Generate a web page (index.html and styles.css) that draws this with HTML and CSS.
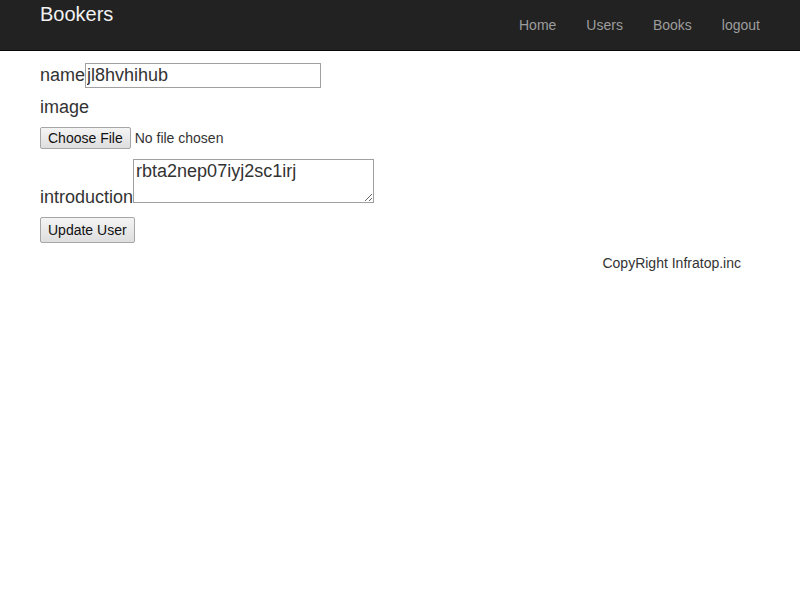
FILE: index.html
```html
<!DOCTYPE html>
<html>
<head>
<meta charset="utf-8">
<title>Bookers</title>
<link rel="stylesheet" href="styles.css">
</head>
<body>
<header class="navbar">
  <div class="container nav-inner">
    <a class="brand" href="#">Bookers</a>
    <ul class="nav-links">
      <li><a href="#">Home</a></li>
      <li><a href="#">Users</a></li>
      <li><a href="#">Books</a></li>
      <li><a href="#">logout</a></li>
    </ul>
  </div>
</header>
<main class="container main">
  <form class="user-form">
    <div class="field field-name"><label>name</label><input type="text" class="text-input" value="jl8hvhihub"></div>
    <div class="field field-image"><label>image</label></div>
    <div class="field field-file"><input type="file" class="file-input"></div>
    <div class="field field-intro"><label>introduction</label><textarea class="intro-input">rbta2nep07iyj2sc1irj</textarea></div>
    <div class="field field-submit"><input type="submit" class="submit-btn" value="Update User"></div>
  </form>
  <footer class="footer">CopyRight Infratop.inc</footer>
</main>
</body>
</html>
```
FILE: styles.css
```css
html, body {
  margin: 0;
  padding: 0;
}
body {
  font-family: "Liberation Sans", Arial, sans-serif;
  font-size: 14px;
  color: #333;
  background: #fff;
}
.container {
  width: 720px;
  margin: 0 auto;
  padding: 0 40px;
}
.navbar {
  background: #222;
  border-bottom: 1px solid #080808;
  height: 50px;
}
.nav-inner {
  display: flex;
  justify-content: space-between;
  align-items: flex-start;
  height: 50px;
}
.brand {
  color: #f2f2f2;
  font-size: 20px;
  line-height: 28px;
  text-decoration: none;
}
.nav-links {
  list-style: none;
  margin: 0 -15px 0 0;
  padding: 0;
  display: flex;
}
.nav-links a {
  display: block;
  padding: 15px;
  line-height: 20px;
  color: #9d9d9d;
  text-decoration: none;
  font-size: 14px;
}
.main {
  padding-top: 12px;
}
.field {
  font-size: 18px;
  color: #333;
}
.field-name {
  display: flex;
  align-items: baseline;
  height: 25px;
}
.text-input {
  font-family: "Liberation Sans", Arial, sans-serif;
  font-size: 18px;
  width: 236px;
  height: 25px;
  box-sizing: border-box;
  border: 1px solid #a0a0a0;
  padding: 0 1px;
  margin: 0;
  color: #333;
}
.field-image {
  margin-top: 9px;
  line-height: 21px;
}
.field-file {
  margin-top: 9px;
  height: 22px;
}
.file-input {
  font-family: "Liberation Sans", Arial, sans-serif;
  font-size: 14px;
  margin: 0;
  color: #333;
}
.file-input::file-selector-button {
  font-family: "Liberation Sans", Arial, sans-serif;
  font-size: 14px;
  height: 22px;
  padding: 0 7px;
  margin-right: 4px;
  border: 1px solid #a6a6a6;
  border-radius: 2px;
  background: linear-gradient(#f4f4f4, #dedede);
  color: #111;
}
.field-intro {
  margin-top: 10px;
  line-height: 21px;
}
.intro-input {
  font-family: "Liberation Sans", Arial, sans-serif;
  font-size: 18px;
  width: 241px;
  height: 44px;
  box-sizing: border-box;
  border: 1px solid #a0a0a0;
  padding: 1px 2px;
  margin: 0;
  color: #333;
  vertical-align: baseline;
}
.field-submit {
  margin-top: 9px;
}
.submit-btn {
  font-family: "Liberation Sans", Arial, sans-serif;
  font-size: 14px;
  height: 26px;
  padding: 0 7px;
  margin: 0;
  border: 1px solid #a6a6a6;
  border-radius: 2px;
  background: linear-gradient(#f4f4f4, #dedede);
  color: #111;
}
.footer {
  margin-top: 10px;
  text-align: right;
  padding-right: 19px;
  line-height: 20px;
  font-size: 14px;
  color: #333;
}
```
